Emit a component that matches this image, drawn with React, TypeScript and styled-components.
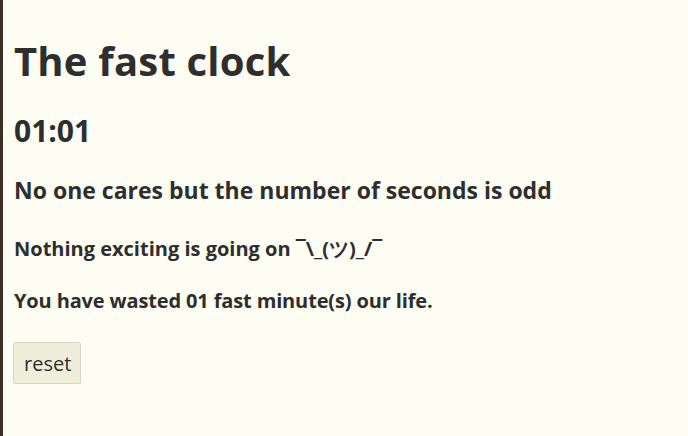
import React from "react";
import styled, { createGlobalStyle } from "styled-components";

const Global = createGlobalStyle`
  html, body { margin: 0; padding: 0; }
  body {
    background: #fdfdf3;
    font-family: "Open Sans", "Noto Sans", sans-serif;
    color: #2e2e2e;
    font-size: 20px;
  }
`;

const Page = styled.div`
  min-height: 436px;
  box-sizing: border-box;
  border-left: 3px solid #3a2f22;
  padding: 1px 0 0 11px;
`;

const Title = styled.h1`
  font-size: 40px;
  font-weight: 700;
  line-height: 46px;
  letter-spacing: 0.2px;
  margin: 37px 0 0;
`;

const Clock = styled.h2`
  font-size: 30px;
  font-weight: 700;
  line-height: 34px;
  margin: 30px 0 0;
`;

const Note = styled.h3`
  font-size: 23px;
  font-weight: 700;
  line-height: 28px;
  margin: 28px 0 0;
`;

const Line = styled.h4<{ $gap: number; $tight?: boolean }>`
  font-size: 20px;
  font-weight: 700;
  line-height: 24px;
  letter-spacing: ${(p) => (p.$tight ? "-0.14px" : "normal")};
  margin: ${(p) => p.$gap}px 0 0;
`;

const ResetButton = styled.button`
  margin: 29px 0 0 -1px;
  height: 42px;
  padding: 0 9px 0 10px;
  font-family: "Open Sans", "Noto Sans", sans-serif;
  font-size: 20px;
  color: #2e2e2e;
  background: #eeeedb;
  border: 1px solid #d6d6cc;
  border-radius: 2px;
`;

export default function App() {
  return (
    <>
      <Global />
      <Page>
        <Title>The fast clock</Title>
        <Clock>01:01</Clock>
        <Note>No one cares but the number of seconds is odd</Note>
        <Line $gap={33}>Nothing exciting is going on ¯\_(ツ)_/¯</Line>
        <Line $gap={28} $tight>
          You have wasted 01 fast minute(s) our life.
        </Line>
        <ResetButton>reset</ResetButton>
      </Page>
    </>
  );
}
